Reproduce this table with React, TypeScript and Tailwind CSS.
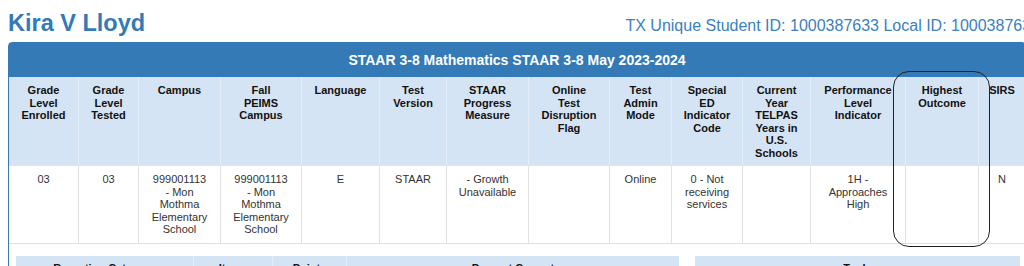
import React from "react";

const headers: string[][] = [
  ["Grade", "Level", "Enrolled"],
  ["Grade", "Level", "Tested"],
  ["Campus"],
  ["Fall", "PEIMS", "Campus"],
  ["Language"],
  ["Test", "Version"],
  ["STAAR", "Progress", "Measure"],
  ["Online", "Test", "Disruption", "Flag"],
  ["Test", "Admin", "Mode"],
  ["Special", "ED", "Indicator", "Code"],
  ["Current", "Year", "TELPAS", "Years in", "U.S.", "Schools"],
  ["Performance", "Level", "Indicator"],
  ["Highest", "Outcome"],
  ["SIRS"],
];

const campus = ["999001113", "- Mon", "Mothma", "Elementary", "School"];

const values: string[][] = [
  ["03"],
  ["03"],
  campus,
  campus,
  ["E"],
  ["STAAR"],
  ["- Growth", "Unavailable"],
  [],
  ["Online"],
  ["0 - Not", "receiving", "services"],
  [],
  ["1H -", "Approaches", "High"],
  [],
  ["N"],
];

const gridCols =
  "grid grid-cols-[70px_60px_82px_81px_78px_67px_82px_81px_62px_71px_68px_95px_73px_46px]";

export default function App() {
  return (
    <div className="relative w-[1024px] h-[266px] overflow-hidden bg-white font-['Liberation_Sans',Arial,sans-serif]">
      <div className="w-[1048px] px-2">
        {/* student header */}
        <div className="flex items-baseline justify-between pt-[10px] mb-[6px]">
          <h1 className="text-[23.5px] leading-[26px] font-bold text-[#337ab7]">Kira V Lloyd</h1>
          <div className="text-[16px] leading-[18px] text-[#3b7fbd]">
            TX Unique Student ID: 1000387633 Local ID: 1000387633
          </div>
        </div>

        {/* result panel */}
        <div className="w-[1018px] border border-[#337ab7] rounded-t-[4px]">
          <div className="h-[34px] bg-[#337ab7] flex items-center justify-center text-white text-[14px] font-bold">
            STAAR 3-8 Mathematics STAAR 3-8 May 2023-2024
          </div>

          <div className={`${gridCols} bg-[#d5e4f4] border-b border-[#dce4ec] text-[11px] leading-[12.5px] font-bold text-[#111]`}>
            {headers.map((lines, i) => (
              <div
                key={i}
                className={`px-1 pt-[7px] pb-[6px] text-center whitespace-nowrap ${i < headers.length - 1 ? "border-r border-[#e4edf7]" : ""}`}
              >
                {lines.map((l, j) => (
                  <div key={j}>{l}</div>
                ))}
              </div>
            ))}
          </div>

          <div className={`${gridCols} bg-white border-b border-[#dedede] text-[11px] leading-[12.5px] text-[#333]`}>
            {values.map((lines, i) => (
              <div
                key={i}
                className={`px-1 pt-[7px] pb-[7px] text-center whitespace-nowrap ${i < values.length - 1 ? "border-r border-[#e2e2e2]" : ""}`}
              >
                {lines.map((l, j) => (
                  <div key={j}>{l}</div>
                ))}
              </div>
            ))}
          </div>

          {/* lower tables */}
          <div className="flex gap-4 pl-[7px] pt-[12px] pb-4">
            <div className="w-[663px] grid grid-cols-[178px_79px_74px_332px] bg-[#d5e4f4] text-[11px] leading-[12.5px] font-bold text-[#111]">
              <div className="py-[6px] text-center border-r border-[#e4edf7]">Reporting Category</div>
              <div className="py-[6px] text-center border-r border-[#e4edf7]">Items</div>
              <div className="py-[6px] text-center border-r border-[#e4edf7]">Points</div>
              <div className="py-[6px] text-center">Percent Correct</div>
            </div>
            <div className="w-[325px] bg-[#d5e4f4] text-[11px] leading-[12.5px] font-bold text-[#111]">
              <div className="py-[6px] text-center">Tools</div>
            </div>
          </div>
        </div>
      </div>

      {/* hand-drawn highlight */}
      <div className="absolute left-[893px] top-[71px] w-[97px] h-[176px] border-[1.5px] border-[#222] rounded-[16px] z-10" />
    </div>
  );
}
